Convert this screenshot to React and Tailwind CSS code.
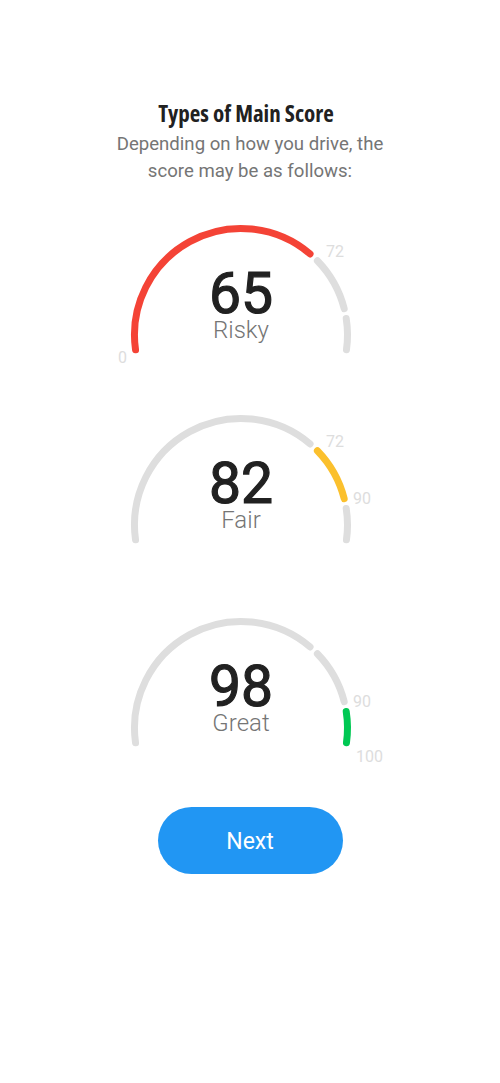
import React from "react";

const GRAY = "#dedede";

const toPoint = (cx, cy, r, deg) => {
  const rad = (deg * Math.PI) / 180;
  return [cx + r * Math.cos(rad), cy - r * Math.sin(rad)];
};

// value 0..100 onto an arc that runs from 188deg to -8deg
const angleOf = (v) => 188 - 1.96 * v;

const arcPath = (cx, cy, r, from, to) => {
  const [x1, y1] = toPoint(cx, cy, r, from);
  const [x2, y2] = toPoint(cx, cy, r, to);
  const large = from - to > 180 ? 1 : 0;
  return `M ${x1} ${y1} A ${r} ${r} 0 ${large} 1 ${x2} ${y2}`;
};

const segments = [
  [0, 72],
  [72, 90],
  [90, 100],
];

const Gauge = ({ score, label, active, color, labels, height }) => {
  const cx = 141;
  const cy = 115;
  const r = 106.5;
  const gap = 2.7;

  return (
    <div className="relative mx-auto w-[300px]" style={{ height }}>
      <svg width="300" height="160" className="absolute left-0 top-0">
        {segments.map(([a, b], i) => {
          const from = angleOf(a) - (a > 0 ? gap : 0);
          const to = angleOf(b) + (b < 100 ? gap : 0);
          return (
            <path
              key={i}
              d={arcPath(cx, cy, r, from, to)}
              fill="none"
              stroke={i === active ? color : GRAY}
              strokeWidth="7"
              strokeLinecap="round"
            />
          );
        })}
        {labels.map((l) => (
          <text
            key={l.text}
            x={cx + l.x}
            y={cy + l.y}
            fill="#dddddd"
            fontSize="16"
            fontFamily="Roboto, sans-serif"
          >
            {l.text}
          </text>
        ))}
      </svg>
      <div className="absolute left-0 top-[50px] flex w-[282px] flex-col items-center">
        <div className="text-[57px] font-normal leading-[48px] text-[#212121] [-webkit-text-stroke:1.2px_#212121]">
          {score}
        </div>
        <div className="text-[24px] font-light leading-none text-[#757575]">
          {label}
        </div>
      </div>
    </div>
  );
};

export default function App() {
  return (
    <div className="min-h-[1083px] w-full bg-white font-['Roboto',sans-serif]">
      <div className="flex flex-col items-center pt-[98px]">
        <h1 className="mr-[8px] font-['Open_Sans',sans-serif] text-[23px] font-bold leading-[30px] text-[#212121] [font-stretch:75%]">
          Types of Main Score
        </h1>
        <p className="mt-[3px] text-center text-[18.6px] leading-[27px] text-[#757575]">
          Depending on how you drive, the
          <br />
          score may be as follows:
        </p>
      </div>

      <div className="mt-[35px] flex flex-col">
        <Gauge
          score="65"
          label="Risky"
          active={0}
          color="#f44336"
          height={190}
          labels={[
            { text: "0", x: -123, y: 28 },
            { text: "72", x: 85, y: -78 },
          ]}
        />
        <Gauge
          score="82"
          label="Fair"
          active={1}
          color="#fbc02d"
          height={203}
          labels={[
            { text: "72", x: 85, y: -78 },
            { text: "90", x: 112, y: -21 },
          ]}
        />
        <Gauge
          score="98"
          label="Great"
          active={2}
          color="#00c853"
          height={194}
          labels={[
            { text: "90", x: 112, y: -21 },
            { text: "100", x: 115, y: 34 },
          ]}
        />
      </div>

      <div className="flex justify-center">
        <button className="flex h-[67px] w-[185px] items-center justify-center rounded-full bg-[#2196f3] pt-[3px] text-[23px] text-white">
          Next
        </button>
      </div>
    </div>
  );
}
